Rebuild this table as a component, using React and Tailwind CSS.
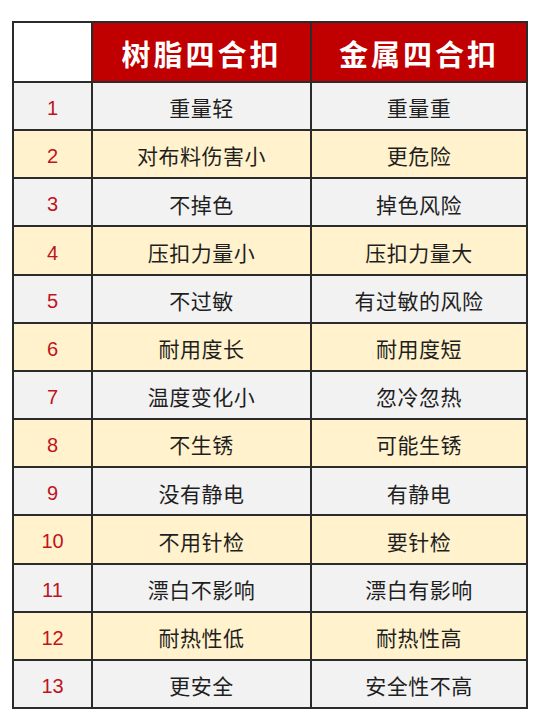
import React from "react";

const rows = [
  ["重量轻", "重量重"],
  ["对布料伤害小", "更危险"],
  ["不掉色", "掉色风险"],
  ["压扣力量小", "压扣力量大"],
  ["不过敏", "有过敏的风险"],
  ["耐用度长", "耐用度短"],
  ["温度变化小", "忽冷忽热"],
  ["不生锈", "可能生锈"],
  ["没有静电", "有静电"],
  ["不用针检", "要针检"],
  ["漂白不影响", "漂白有影响"],
  ["耐热性低", "耐热性高"],
  ["更安全", "安全性不高"],
];

function HeaderCell({ children }) {
  return (
    <div className="bg-[#c00000] text-white font-bold text-[29px] tracking-[3px] flex items-center justify-center pt-[3px] font-['Noto_Sans_CJK_SC','Noto_Sans',sans-serif]">
      {children}
    </div>
  );
}

function Row({ n, a, b }) {
  const even = n % 2 === 1;
  const bg = even ? "bg-[#f2f2f2]" : "bg-[#fff2cc]";
  const text =
    "text-[#1f1f1f] text-[21px] tracking-[0.5px] flex items-center justify-center pt-[4px] font-['Noto_Sans_CJK_SC','Noto_Sans',sans-serif]";
  return (
    <>
      <div
        className={
          even
            ? "bg-[#f2f2f2] text-[#c0141c] text-[20px] flex items-center justify-center pt-[4px] font-['Liberation_Sans',Arial,sans-serif]"
            : "bg-[#fff2cc] text-[#c0141c] text-[20px] flex items-center justify-center pt-[4px] font-['Liberation_Sans',Arial,sans-serif]"
        }
      >
        {n}
      </div>
      <div className={even ? "bg-[#f2f2f2] " + text : "bg-[#fff2cc] " + text}>{a}</div>
      <div className={even ? "bg-[#f2f2f2] " + text : "bg-[#fff2cc] " + text}>{b}</div>
    </>
  );
}

export default function App() {
  return (
    <div className="bg-white w-[560px] h-[720px] pt-[21px] pl-[12px]">
      <div className="grid grid-cols-[77px_217px_214px] grid-rows-[58px_repeat(13,1fr)] gap-[2px] p-[2px] bg-[#2b2b2b] w-[516px] h-[688px]">
        <div className="bg-white" />
        <HeaderCell>树脂四合扣</HeaderCell>
        <HeaderCell>金属四合扣</HeaderCell>
        {rows.map((r, i) => (
          <Row key={i} n={i + 1} a={r[0]} b={r[1]} />
        ))}
      </div>
    </div>
  );
}
